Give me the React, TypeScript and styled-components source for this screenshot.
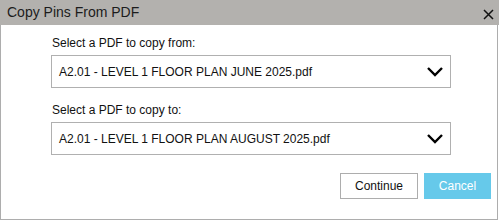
import React, { FC } from "react";
import styled, { createGlobalStyle } from "styled-components";

const GlobalStyle = createGlobalStyle`
  html, body {
    margin: 0;
    padding: 0;
    background: #ffffff;
  }
  body {
    font-family: Arial, "Liberation Sans", sans-serif;
    color: #111111;
  }
`;

const Dialog = styled.div`
  width: 498px;
  height: 220px;
  box-sizing: border-box;
  border: 1px solid #adadad;
  border-top: none;
  display: flex;
  flex-direction: column;
`;

const Header = styled.div`
  height: 25px;
  margin: 0 -2px 0 -1px;
  padding: 0 0 0 7px;
  background: #b3b1ae;
  display: flex;
  align-items: center;
  justify-content: space-between;
`;

const Title = styled.h1`
  margin: 0;
  font-size: 14px;
  font-weight: normal;
  color: #1c1c1c;
  line-height: 25px;
`;

const Close = styled.button`
  width: 20px;
  height: 25px;
  margin-right: 1px;
  padding: 3px 0 0;
  border: none;
  background: transparent;
  display: flex;
  align-items: center;
  justify-content: center;
`;

const Body = styled.div`
  flex: 1;
  padding: 11px 46px 0 50px;
  display: flex;
  flex-direction: column;
`;

const Field = styled.div<{ $gap?: number }>`
  display: flex;
  flex-direction: column;
  margin-bottom: ${(p) => p.$gap ?? 0}px;
`;

const Label = styled.label`
  font-size: 12px;
  line-height: 14px;
  margin: 0 0 5px 1px;
  color: #111111;
`;

const SelectBox = styled.div`
  width: 400px;
  height: 33px;
  box-sizing: border-box;
  border: 1px solid #b0b0b0;
  display: flex;
  align-items: center;
  justify-content: space-between;
  padding: 0 6px 0 7px;
  font-size: 12px;
  color: #111111;
`;

const Actions = styled.div`
  display: flex;
  justify-content: flex-end;
  gap: 6px;
  margin-top: 18px;
  margin-right: -40px;
`;

const Button = styled.button<{ $primary?: boolean }>`
  height: 26px;
  box-sizing: border-box;
  font-family: Arial, "Liberation Sans", sans-serif;
  font-size: 12px;
  padding: 0;
  width: ${(p) => (p.$primary ? 67 : 78)}px;
  border: 1px solid ${(p) => (p.$primary ? "#66c9ea" : "#adadad")};
  background: ${(p) => (p.$primary ? "#66c9ea" : "#ffffff")};
  color: ${(p) => (p.$primary ? "#ffffff" : "#111111")};
`;

const Chevron: FC = () => (
  <svg width="18" height="11" viewBox="0 0 18 11">
    <polyline points="2,2 9,9 16,2" fill="none" stroke="#000" strokeWidth="2.4" />
  </svg>
);

const CloseIcon: FC = () => (
  <svg width="11" height="11" viewBox="0 0 11 11">
    <path d="M1 1 L10 10 M10 1 L1 10" stroke="#111" strokeWidth="1.5" />
  </svg>
);

const PdfSelect: FC<{ label: string; value: string; gap?: number }> = ({ label, value, gap }) => (
  <Field $gap={gap}>
    <Label>{label}</Label>
    <SelectBox>
      <span>{value}</span>
      <Chevron />
    </SelectBox>
  </Field>
);

const App: FC = () => (
  <>
    <GlobalStyle />
    <Dialog>
      <Header>
        <Title>Copy Pins From PDF</Title>
        <Close aria-label="close">
          <CloseIcon />
        </Close>
      </Header>
      <Body>
        <PdfSelect
          label="Select a PDF to copy from:"
          value="A2.01 - LEVEL 1 FLOOR PLAN JUNE 2025.pdf"
          gap={15}
        />
        <PdfSelect
          label="Select a PDF to copy to:"
          value="A2.01 - LEVEL 1 FLOOR PLAN AUGUST 2025.pdf"
        />
        <Actions>
          <Button>Continue</Button>
          <Button $primary>Cancel</Button>
        </Actions>
      </Body>
    </Dialog>
  </>
);

export default App;
